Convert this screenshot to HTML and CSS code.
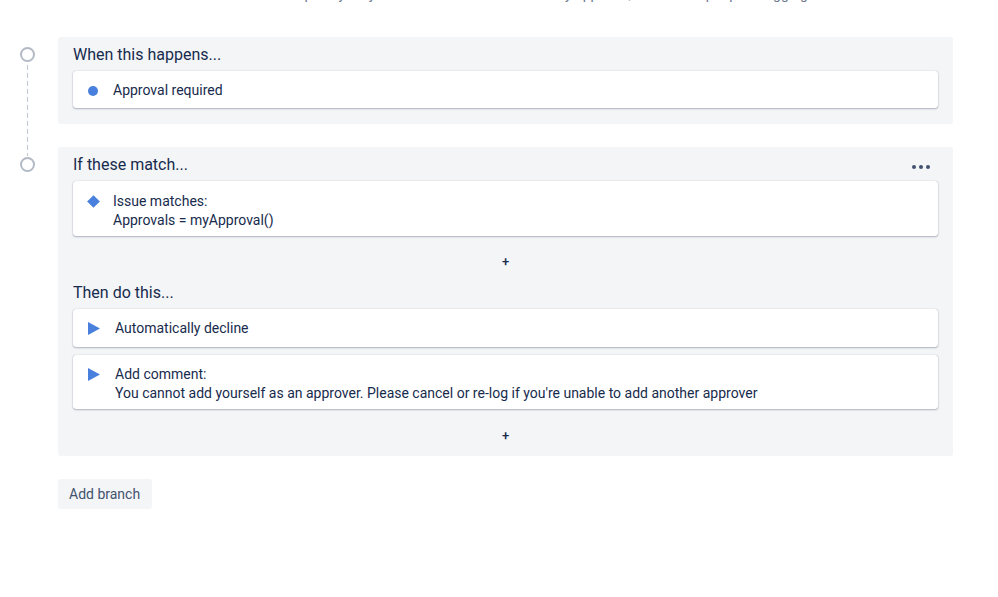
FILE: index.html
```html
<!DOCTYPE html>
<html>
<head>
<meta charset="utf-8">
<link rel="stylesheet" href="styles.css">
</head>
<body>
<div class="page">
  <p class="intro">This rule stops anybody who tries to add themselves by approval, then it is kept up for logging so it can be reviewed.</p>

  <div class="section first">
    <div class="rail">
      <span class="node"></span>
      <span class="dash"></span>
    </div>
    <div class="panel">
      <div class="panel-head">
        <h3 class="panel-title">When this happens...</h3>
      </div>
      <div class="card single">
        <span class="icon dot"></span>
        <div class="card-text">Approval required</div>
      </div>
    </div>
  </div>

  <div class="section">
    <div class="rail">
      <span class="node"></span>
    </div>
    <div class="panel">
      <div class="panel-head">
        <h3 class="panel-title">If these match...</h3>
        <button class="more" aria-label="More"><span></span><span></span><span></span></button>
      </div>
      <div class="card condition">
        <span class="icon diamond"></span>
        <div class="card-text">Issue matches:<br>Approvals = myApproval()</div>
      </div>
      <div class="add-row"><span class="plus">+</span></div>
      <div class="panel-head">
        <h3 class="panel-title">Then do this...</h3>
      </div>
      <div class="card-list">
        <div class="card single action">
          <svg class="icon tri" width="12" height="13" viewBox="0 0 12 13"><path d="M0 0 L12 6.5 L0 13 Z" fill="#4a80dd"/></svg>
          <div class="card-text">Automatically decline</div>
        </div>
        <div class="card">
          <svg class="icon tri" width="12" height="13" viewBox="0 0 12 13"><path d="M0 0 L12 6.5 L0 13 Z" fill="#4a80dd"/></svg>
          <div class="card-text">Add comment:<br>You cannot add yourself as an approver. Please cancel or re-log if you're unable to add another approver</div>
        </div>
      </div>
      <div class="add-row last"><span class="plus">+</span></div>
    </div>
  </div>

  <div class="actions">
    <button class="btn">Add branch</button>
  </div>
</div>
</body>
</html>
```

FILE: styles.css
```css
* { box-sizing: border-box; }
html, body { margin: 0; padding: 0; background: #fff; }
body {
  font-family: Roboto, "Liberation Sans", sans-serif;
  font-size: 14px;
  color: #172b4d;
  width: 998px;
  height: 597px;
  overflow: hidden;
}
.page {
  padding-right: 45px;
}
.intro {
  margin: -16px 0 0 228px;
  line-height: 20px;
  color: #6b778c;
  white-space: nowrap;
}
.section {
  display: flex;
  margin-top: 33px;
}
.section + .section { margin-top: 23px; }
.rail {
  width: 58px;
  flex: none;
  display: flex;
  flex-direction: column;
  align-items: center;
  padding-top: 10px;
  padding-right: 4px;
}
.node {
  width: 15px;
  height: 15px;
  border: 2px solid #b3bac5;
  border-radius: 50%;
  background: #fff;
  flex: none;
}
.dash {
  flex: 1;
  width: 1px;
  margin-top: 3px;
  margin-bottom: -32px;
  background: repeating-linear-gradient(to bottom, #c1c7d0 0, #c1c7d0 5px, transparent 5px, transparent 8px);
}
.panel {
  flex: 1;
  background: #f4f5f7;
  border-radius: 3px;
  padding: 6px 15px 16px;
}
.panel-head {
  display: flex;
  align-items: center;
  justify-content: space-between;
  height: 24px;
  margin-bottom: 4px;
}
.panel-title {
  margin: 0;
  font-size: 16px;
  font-weight: 400;
  line-height: 24px;
  color: #172b4d;
}
.more {
  display: flex;
  gap: 3px;
  border: 0;
  background: transparent;
  padding: 0;
  margin-right: 8px;
  margin-top: 3px;
}
.more span {
  width: 4px;
  height: 4px;
  border-radius: 50%;
  background: #42526e;
}
.card {
  display: flex;
  align-items: flex-start;
  background: #fff;
  border-radius: 3px;
  box-shadow: 0 1px 2px rgba(9, 30, 66, 0.28), 0 0 1px rgba(9, 30, 66, 0.35);
  padding: 10px 15px 6px;
  line-height: 19px;
  font-size: 14px;
}
.card.single { padding-top: 10px; padding-bottom: 8px; }
.card.single.action { padding-bottom: 9px; }
.card.condition { padding-top: 11px; padding-bottom: 6px; }
.card-list {
  display: flex;
  flex-direction: column;
  gap: 8px;
}
.icon {
  flex: none;
  margin-right: 15px;
}
.dot {
  width: 10px;
  height: 10px;
  border-radius: 50%;
  background: #4a80dd;
  margin-top: 5px;
}
.diamond {
  width: 9px;
  height: 9px;
  background: #4a80dd;
  transform: rotate(45deg);
  margin: 5px 15px 0 1px;
}
.tri {
  display: block;
  margin-top: 3px;
}
.add-row {
  display: flex;
  justify-content: center;
  align-items: center;
  height: 30px;
  margin-top: 10px;
  margin-bottom: 5px;
}
.add-row.last { margin-top: 11px; margin-bottom: -10px; }
.plus {
  font-size: 13px;
  font-weight: 500;
  color: #172b4d;
  line-height: 1;
}
.actions {
  padding-left: 58px;
  margin-top: 23px;
}
.btn {
  font-family: inherit;
  font-size: 14px;
  color: #42526e;
  background: #f4f5f7;
  border: 0;
  border-radius: 3px;
  height: 30px;
  padding: 0 11px;
  width: 94px;
  text-align: left;
}
```
